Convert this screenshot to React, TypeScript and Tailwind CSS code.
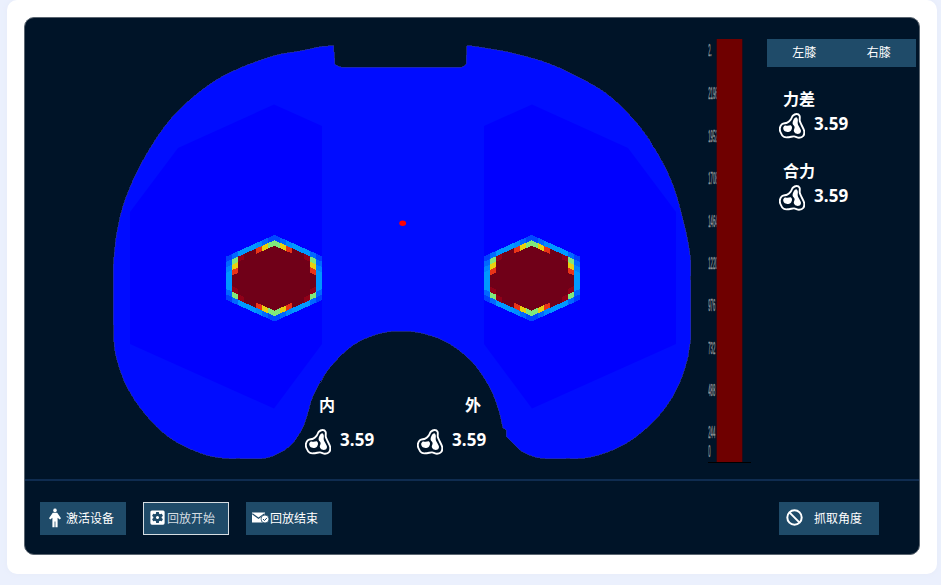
import React from "react";
import { MdSettingsApplications } from "react-icons/md";

type Pt = [number, number];

// Catmull-Rom spline through the points, as cubic segments.
function spline(points: Pt[], closed = false): string {
  const n = points.length;
  const at = (i: number): Pt =>
    closed ? points[(i + n) % n] : points[Math.max(0, Math.min(n - 1, i))];
  let d = "";
  const last = closed ? n : n - 1;
  for (let i = 0; i < last; i++) {
    const [a, b, c, e] = [at(i - 1), at(i), at(i + 1), at(i + 2)];
    d += `C${b[0] + (c[0] - a[0]) / 6} ${b[1] + (c[1] - a[1]) / 6} ${c[0] - (e[0] - b[0]) / 6} ${c[1] - (e[1] - b[1]) / 6} ${c[0]} ${c[1]}`;
  }
  return d;
}

const rightSide: Pt[] = [
  [469, 45.5], [500, 50.5], [520, 55], [550, 64], [584, 80], [612, 98], [640, 127], [659, 156],
  [673, 185], [682, 216], [688, 242], [690.5, 260], [690.5, 280], [690.5, 320], [690.5, 340],
  [685, 368], [673, 396], [655, 420], [630, 441], [605, 453], [585, 458], [566, 458.5],
  [545, 458.5], [532, 456], [520, 450], [506, 436],
];
const arch: Pt[] = [
  [503, 428], [498, 408], [490, 388], [474, 364], [450, 344], [425, 334], [402, 331], [378, 334],
  [352, 346], [328, 370], [313, 396], [307, 416], [301, 431], [290, 446], [275, 455], [262, 458.5],
  [240, 458.5], [222, 458], [200, 453], [170, 438], [145, 414], [127, 387], [117, 360], [114, 342],
  [113.5, 325], [113.5, 280], [113.5, 264], [117, 232], [125, 200], [140, 166], [160, 133],
  [180, 109], [210, 84], [240, 68], [275, 55.5], [300, 51], [322, 46.5], [333.5, 46],
];
const plateau =
  "M469 45.5" + spline(rightSide) + "L506 430L503 428" + spline(arch) +
  "L335 64Q336 66 341 67L462 67Q466 65 466 64L467 46Z";

// [column, row, colour] of the cells of one quarter, counted from the apex.
const quarter: [number, number, string][] = [
  [0, 0, "#0048ff"], [1, 0, "#0068ff"], [2, 0, "#008cff"], [6, 0, "#0068ff"], [7, 0, "#0040ff"],
  [0, 1, "#80e87c"], [1, 1, "#e8d010"], [2, 1, "#e83418"],
  [5, 1, "#900018"], [6, 1, "#80e87c"], [7, 1, "#0068ff"],
];
const upperOnly: [number, number, string][] = [
  [6, 2, "#e8d010"], [6, 3, "#e83418"], [7, 2, "#0084ff"],
];
const lowerOnly: [number, number, string][] = [[6, 2, "#900018"]];

function Pressure({ cx }: { cx: number }) {
  const quad = (sx: number, sy: number, cells: [number, number, string][]) =>
    cells.map(([c, r, fill]) => {
      const y = -43.3 + 2.7 * c + 5.4 * r;
      return (
        <polygon
          key={`${sx}${sy}${c}-${r}`}
          fill={fill}
          points={`${sx * 6 * c},${sy * -y} ${sx * 6 * (c + 1)},${sy * -(y + 2.7)} ${sx * 6 * (c + 1)},${sy * -(y + 8.1)} ${sx * 6 * c},${sy * -(y + 5.4)}`}
        />
      );
    });
  return (
    <g transform={`translate(${cx} 278.2)`} shapeRendering="crispEdges">
      <polygon fill="#0098ff" points="0,-43.3 48,-21.7 48,21.7 0,43.3 -48,21.7 -48,-21.7" />
      <polygon fill="#700018" points="0,-37.9 42,-19 42,19 0,37.9 -42,19 -42,-19" />
      {[-1, 1].map((sx) => (
        <g key={sx}>
          {quad(sx, 1, [...quarter, ...lowerOnly])}
          {quad(sx, -1, [...quarter, ...upperOnly])}
        </g>
      ))}
    </g>
  );
}

function KneeMap() {
  return (
    <svg className="block h-[461px] w-[683px]" viewBox="25 18 683 461">
      <path d={plateau} fill="#000cff" stroke="#28329c" strokeWidth="0.7" shapeRendering="crispEdges" />
      <g fill="#0000ff">
        <polygon points="274,104.5 322,126 322,344 274,408.5 130,344 130,212 178,148" />
        <polygon points="532,104.5 484,126 484,344 532,408.5 676,344 676,212 628,148" />
      </g>
      <Pressure cx={274.4} />
      <Pressure cx={531.6} />
      <ellipse cx="402.7" cy="223.2" rx="3.4" ry="2.7" fill="#ff0000" />
    </svg>
  );
}

const ticks: [string, number][] = [
  ["2.", 50], ["2196", 93], ["1952", 135.5], ["1708", 178], ["1464", 220.5], ["1220", 263],
  ["976", 305], ["732", 347.5], ["488", 390], ["244", 432], ["0", 450.5],
];

function ColorScale() {
  return (
    <svg className="block h-[461px] w-[44px]" viewBox="708 18 44 461">
      {ticks.map(([label, y]) => (
        <text
          key={label}
          transform={`translate(708.3 ${y + 6}) scale(0.26 1)`}
          fill="#8d9194"
          stroke="#8d9194"
          strokeWidth="0.5"
          fontSize="16"
          fontFamily="Liberation Sans, sans-serif"
        >
          {label}
        </text>
      ))}
      <rect x="716.5" y="39" width="26" height="423" fill="#480008" />
      <rect x="717" y="39" width="25" height="423" fill="#6f0000" />
      <rect x="708" y="462" width="43" height="1" fill="#000" />
    </svg>
  );
}

const rim: Pt[] = [
  [17.5, 1], [20.6, 2.8], [20.8, 8], [22.8, 12.5], [25.2, 18], [24.2, 23], [20, 24.8], [15, 23.4],
  [10, 24.2], [4.8, 23.8], [1.4, 19], [1, 14.5], [3.2, 11], [8.2, 9.6], [11.7, 6.6], [13.8, 2.8],
];
const lobe: Pt[] = [
  [17.3, 4.2], [18.8, 6.5], [18.8, 11], [20.8, 15], [22, 18], [20.5, 20.6], [17, 20.6],
  [14.8, 18], [15.6, 14], [13.6, 10.5], [14.8, 6.2],
];
const pad: Pt[] = [
  [4.2, 14.8], [6, 12.6], [8.6, 12.8], [12, 12.4], [13, 15], [11.6, 18], [8.4, 19], [5.2, 17.8],
];

function MeniscusIcon() {
  return (
    <svg className="size-[26px] shrink-0" viewBox="0 0 26 26" fill="#fff">
      <path d={`M17.5 1${spline(rim, true)}Z`} fill="#001428" stroke="#fff" strokeWidth="1.9" />
      <path d={`M17.3 4.2${spline(lobe, true)}Z`} />
      <path d={`M4.2 14.8${spline(pad, true)}Z`} />
    </svg>
  );
}

function Reading() {
  return (
    <div className="flex h-[26px] items-start gap-2">
      <MeniscusIcon />
      <span className="pl-px font-['Noto_Sans'] text-[17px] leading-[22px] font-bold tracking-[0.1px]">3.59</span>
    </div>
  );
}

function ManIcon() {
  return (
    <svg className="h-5 w-3 shrink-0" viewBox="0 0 12 20" fill="#fff">
      <circle cx="6" cy="2.4" r="1.8" />
      <path d="M3.8 4.8h4.4L12 10.2l-1.3 1.2-2.1-1.6v9.4H6.4v-5.6h-.8v5.6H3.4V9.800l-2.1 1.6L0 10.200z" />
    </svg>
  );
}

function MailIcon() {
  return (
    <svg className="h-[14px] w-[17px] shrink-0" viewBox="0 0 17 14">
      <path fill="#fff" d="M0 1.500h13v10H0z" />
      <path d="M.3 2.700 6.500 7.300l6.200-4.600" fill="none" stroke="#1f4b69" strokeWidth="1.2" />
      <circle cx="13" cy="8" r="4" fill="#fff" stroke="#1f4b69" strokeWidth=".8" />
      <path d="m11 8 1.500 1.600L15 6.800" fill="none" stroke="#1f4b69" />
    </svg>
  );
}

function BlockIcon() {
  return (
    <svg className="size-[17px] shrink-0" viewBox="0 0 17 17" fill="none" stroke="#fff" strokeWidth="2">
      <circle cx="8.500" cy="8.500" r="7.200" />
      <path d="m3.400 3.400 10.200 10.200" />
    </svg>
  );
}

const button = "flex h-[33px] w-[86px] items-center bg-[#1f4b69] pb-[2px] text-xs whitespace-nowrap";

export default function App() {
  return (
    <div className="h-[585px] w-[941px] overflow-hidden bg-[#ebf0fd] pl-[7px] font-['Noto_Sans_CJK_SC',sans-serif] text-white">
      <div className="h-[574px] w-[930px] rounded-[10px] bg-white pt-[17px] pl-[17px] shadow-[0_0_6px_#e6ebf8]">
        <div className="flex h-[538px] w-[896px] flex-col overflow-hidden rounded-[10px] border border-[#5a6570] bg-[#001428]">
          <main className="flex h-[461px] shrink-0">
            <div className="relative">
              <KneeMap />
              <div className="absolute top-[375px] left-[280px] flex w-[184px] gap-[43px]">
                <div className="w-[69px] shrink-0">
                  <div className="h-9 pl-[14px] text-base leading-[22px] font-bold">内</div>
                  <Reading />
                </div>
                <div className="w-[69px] shrink-0">
                  <div className="h-9 pl-[48px] text-base leading-[22px] font-bold">外</div>
                  <Reading />
                </div>
              </div>
            </div>
            <ColorScale />
            <aside className="ml-[15px] w-[149px] pt-[21px]">
              <div className="grid h-7 grid-cols-2 items-center bg-[#1f4b69] pb-[2px] text-center text-xs">
                <span>左膝</span>
                <span>右膝</span>
              </div>
              <div className="flex flex-col gap-[21px] pt-[21px] pl-3">
                <div>
                  <div className="h-[25px] pl-1 text-base leading-5 font-bold">力差</div>
                  <Reading />
                </div>
                <div>
                  <div className="h-[25px] pl-1 text-base leading-5 font-bold">合力</div>
                  <Reading />
                </div>
              </div>
            </aside>
          </main>
          <footer className="flex flex-1 items-start gap-[17px] border-t-2 border-[#0f2c50] pt-[21px] pr-10 pl-[15px]">
            <button className={`${button} gap-[5px] pl-[9px]`}>
              <ManIcon />
              激活设备
            </button>
            <button className={`${button} border border-[#d5dde2] pl-1 text-[#d5dde2]`}>
              <MdSettingsApplications className="size-[19px] shrink-0 text-white" />
              回放开始
            </button>
            <button className={`${button} gap-[1px] pl-[6px]`}>
              <MailIcon />
              回放结束
            </button>
            <button className="ml-auto flex h-[33px] w-[100px] items-center gap-[11px] bg-[#1f4b69] pb-[2px] pl-[7px] text-xs whitespace-nowrap">
              <BlockIcon />
              抓取角度
            </button>
          </footer>
        </div>
      </div>
    </div>
  );
}
